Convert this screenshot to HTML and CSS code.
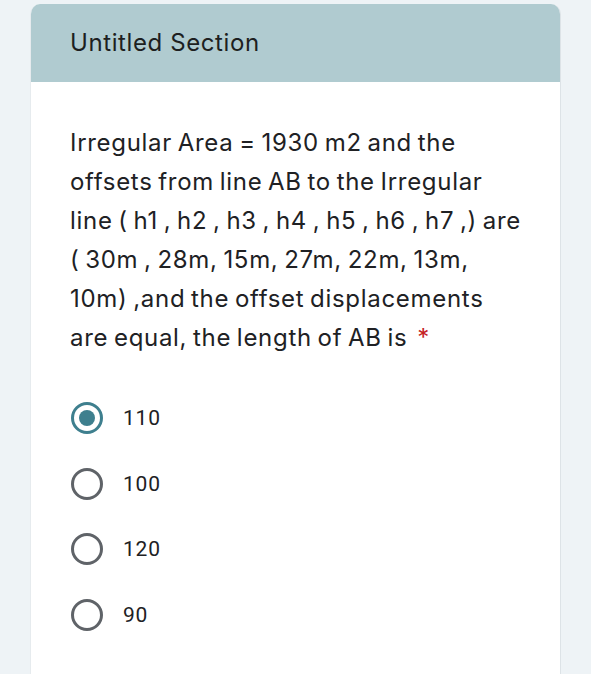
FILE: index.html
```html
<!DOCTYPE html>
<html>
<head>
<meta charset="utf-8">
<link rel="stylesheet" href="styles.css">
</head>
<body>
<div class="page">
  <div class="card">
    <div class="header">Untitled Section</div>
    <div class="body">
      <p class="question">Irregular Area = 1930 m2 and the offsets from line AB to the Irregular line ( h1 , h2 , h3 , h4 , h5 , h6 , h7 ,) are ( 30m , 28m, 15m, 27m, 22m, 13m, 10m) ,and the offset displacements are equal, the length of AB is<span class="req">*</span></p>
      <div class="options">
        <div class="option"><span class="radio checked"></span><span class="label">110</span></div>
        <div class="option"><span class="radio"></span><span class="label">100</span></div>
        <div class="option"><span class="radio"></span><span class="label">120</span></div>
        <div class="option"><span class="radio"></span><span class="label">90</span></div>
      </div>
    </div>
  </div>
</div>
</body>
</html>
```
FILE: styles.css
```css
html, body {
  margin: 0;
  padding: 0;
  background: #eef3f6;
}
.page {
  width: 591px;
  height: 674px;
  overflow: hidden;
  padding: 4px 0 0 30px;
  box-sizing: border-box;
}
.card {
  width: 531px;
  background: #ffffff;
  border-radius: 10px 10px 0 0;
  overflow: hidden;
  border-right: 1px solid #dde3e7;
  border-left: 1px solid #e6ebee;
  box-sizing: border-box;
  height: 700px;
}
.header {
  background: #b0cbd0;
  height: 78px;
  box-sizing: border-box;
  padding: 25px 0 0 39px;
  font-family: Inter, sans-serif;
  font-size: 24px;
  line-height: 28px;
  color: #1d1f21;
  letter-spacing: 0.6px;
}
.body {
  padding: 41px 0 0 39px;
}
.question {
  margin: 0;
  width: 452px;
  font-family: Inter, sans-serif;
  font-size: 24px;
  line-height: 39px;
  color: #202124;
  letter-spacing: 0.7px;
  word-spacing: -1.7px;
}
.req {
  display: inline-block;
  margin-left: 10px;
  color: #c5221f;
}
.options {
  margin-top: 45px;
  display: flex;
  flex-direction: column;
  gap: 33.5px;
}
.option {
  display: flex;
  align-items: center;
  height: 32px;
}
.radio {
  width: 32px;
  height: 32px;
  box-sizing: border-box;
  border: 3px solid #5f6368;
  border-radius: 50%;
  margin-left: 1px;
  position: relative;
}
.radio.checked {
  border-color: #3e7f8e;
}
.radio.checked::after {
  content: "";
  position: absolute;
  left: 5px;
  top: 5px;
  width: 16px;
  height: 16px;
  border-radius: 50%;
  background: #3e7f8e;
}
.label {
  margin-left: 20px;
  font-family: Roboto, sans-serif;
  font-size: 21px;
  color: #202124;
  letter-spacing: 0.8px;
}
```
